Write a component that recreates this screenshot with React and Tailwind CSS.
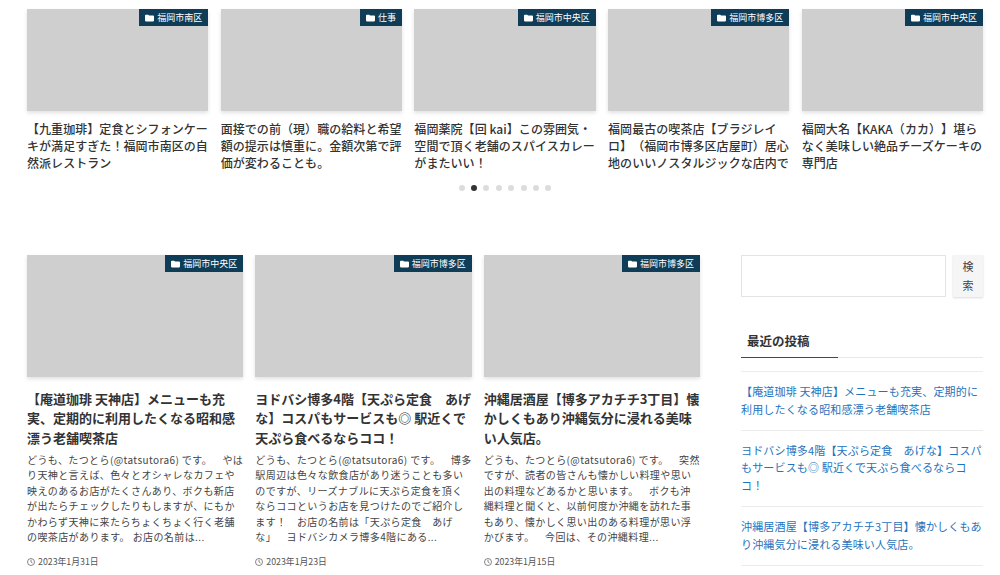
import React from 'react';

const slides = [
  { cat: '福岡市南区', title: '【九重珈琲】定食とシフォンケーキが満足すぎた！福岡市南区の自然派レストラン' },
  { cat: '仕事', title: '面接での前（現）職の給料と希望額の提示は慎重に。金額次第で評価が変わることも。' },
  { cat: '福岡市中央区', title: '福岡薬院【回 kai】この雰囲気・空間で頂く老舗のスパイスカレーがまたいい！' },
  { cat: '福岡市博多区', title: '福岡最古の喫茶店【ブラジレイロ】（福岡市博多区店屋町）居心地のいいノスタルジックな店内で' },
  { cat: '福岡市中央区', title: '福岡大名【KAKA（カカ）】堪らなく美味しい絶品チーズケーキの専門店' },
];

const posts = [
  {
    cat: '福岡市中央区',
    title: '【庵道珈琲 天神店】メニューも充実、定期的に利用したくなる昭和感漂う老舗喫茶店',
    text: 'どうも、たつとら(@tatsutora6) です。　やはり天神と言えば、色々とオシャレなカフェや映えのあるお店がたくさんあり、ボクも新店が出たらチェックしたりもしますが、にもかかわらず天神に来たらちょくちょく行く老舗の喫茶店があります。 お店の名前は...',
    date: '2023年1月31日',
  },
  {
    cat: '福岡市博多区',
    title: 'ヨドバシ博多4階【天ぷら定食　あげな】コスパもサービスも◎ 駅近くで天ぷら食べるならココ！',
    text: 'どうも、たつとら(@tatsutora6) です。　博多駅周辺は色々な飲食店があり迷うことも多いのですが、リーズナブルに天ぷら定食を頂くならココというお店を見つけたのでご紹介します！　お店の名前は「天ぷら定食　あげな」　ヨドバシカメラ博多4階にある...',
    date: '2023年1月23日',
  },
  {
    cat: '福岡市博多区',
    title: '沖縄居酒屋【博多アカチチ3丁目】懐かしくもあり沖縄気分に浸れる美味い人気店。',
    text: 'どうも、たつとら(@tatsutora6) です。　突然ですが、読者の皆さんも懐かしい料理や思い出の料理などあるかと思います。　ボクも沖縄料理と聞くと、以前何度か沖縄を訪れた事もあり、懐かしく思い出のある料理が思い浮かびます。　今回は、その沖縄料理...',
    date: '2023年1月15日',
  },
];

const recent = [
  '【庵道珈琲 天神店】メニューも充実、定期的に利用したくなる昭和感漂う老舗喫茶店',
  'ヨドバシ博多4階【天ぷら定食　あげな】コスパもサービスも◎ 駅近くで天ぷら食べるならココ！',
  '沖縄居酒屋【博多アカチチ3丁目】懐かしくもあり沖縄気分に浸れる美味い人気店。',
];

const FolderIcon = () => (
  <svg viewBox="0 0 16 14" className="w-[9px] h-[8px] shrink-0" fill="#fff">
    <path d="M1.5 1h4.2l1.6 1.7h7.2c.8 0 1.5.7 1.5 1.5v7.3c0 .8-.7 1.5-1.5 1.5h-13C.7 13 0 12.3 0 11.500V2.500C0 1.700.7 1 1.500 1z" />
  </svg>
);

const ClockIcon = () => (
  <svg viewBox="0 0 16 16" className="w-[8px] h-[8px] shrink-0" fill="none" stroke="#555" strokeWidth="1.400">
    <circle cx="8" cy="8" r="7" />
    <path d="M8 3.500V8l3 2" />
  </svg>
);

const Thumb = ({ cat, height }) => (
  <div className={`relative bg-[#cfcfcf] shadow-[0_2px_4px_rgba(0,0,0,0.12)] ${height}`}>
    <div className="absolute top-0 right-0 h-[17px] bg-[#0f3d57] text-white text-[9px] flex items-center gap-[3px] pl-[6px] pr-[6px]">
      <FolderIcon />
      <span>{cat}</span>
    </div>
  </div>
);

export default function App() {
  return (
    <div
      className="h-[575px] overflow-hidden bg-white text-[#333] pt-[9px] pl-[27px] pr-[17px] [text-spacing-trim:space-all]"
      style={{ fontFamily: '"Noto Sans CJK JP", "Noto Sans", sans-serif' }}
    >
      <div className="grid grid-cols-5 gap-x-[12.400px]">
        {slides.map((s) => (
          <div key={s.title}>
            <Thumb cat={s.cat} height="h-[102px]" />
            <h3 className="mt-[9px] h-[51px] overflow-hidden text-[12px] leading-[17px] font-medium tracking-[0.005em] text-[#333]">
              {s.title}
            </h3>
          </div>
        ))}
      </div>

      <div className="flex justify-center gap-[6.400px] mt-[14px] w-[956px]">
        {[0, 1, 2, 3, 4, 5, 6, 7].map((i) => (
          <span key={i} className={`w-[6px] h-[6px] rounded-full ${i === 1 ? 'bg-[#333]' : 'bg-[#dcdcdc]'}`} />
        ))}
      </div>

      <div className="flex mt-[64px]">
        <div className="grid grid-cols-3 gap-x-[12px] w-[673px] shrink-0">
          {posts.map((p) => (
            <div key={p.title}>
              <Thumb cat={p.cat} height="h-[122px]" />
              <h2 className="mt-[12px] text-[13px] leading-[19.300px] font-bold text-[#333]">
                {p.title}
              </h2>
              <p className="mt-[5px] text-[10px] leading-[15.500px] tracking-[0.040em] text-[#444]">{p.text}</p>
              <div className="mt-[10px] flex items-center gap-[3px] text-[8.800px] leading-[14px] text-[#555]">
                <ClockIcon />
                <span>{p.date}</span>
              </div>
            </div>
          ))}
        </div>

        <aside className="ml-[41px] w-[242px] shrink-0">
          <div className="flex gap-[7px]">
            <div className="w-[205px] h-[42px] border border-[#e4e4e4] bg-white" />
            <button className="w-[30px] h-[42px] px-[8px] bg-[#f5f5f5] text-[11px] leading-[19px] text-[#444] shadow-[0_1px_2px_rgba(0,0,0,0.15)]">
              検索
            </button>
          </div>

          <div className="mt-[32px] relative h-[29px] border-b border-[#e8e8e8] pl-[6px] text-[12.500px] leading-[24px] font-bold text-[#333]">
            最近の投稿
            <span className="absolute left-0 bottom-[-1px] w-[97px] h-px bg-[#1f5373]" />
          </div>

          <ul className="mt-[13px] border-t border-[#ececec]">
            {recent.map((r) => (
              <li key={r} className="border-b border-[#ececec] py-[11px] text-[11px] leading-[17.800px] tracking-[0.015em] text-[#1e73be]">
                {r}
              </li>
            ))}
          </ul>
        </aside>
      </div>
    </div>
  );
}
